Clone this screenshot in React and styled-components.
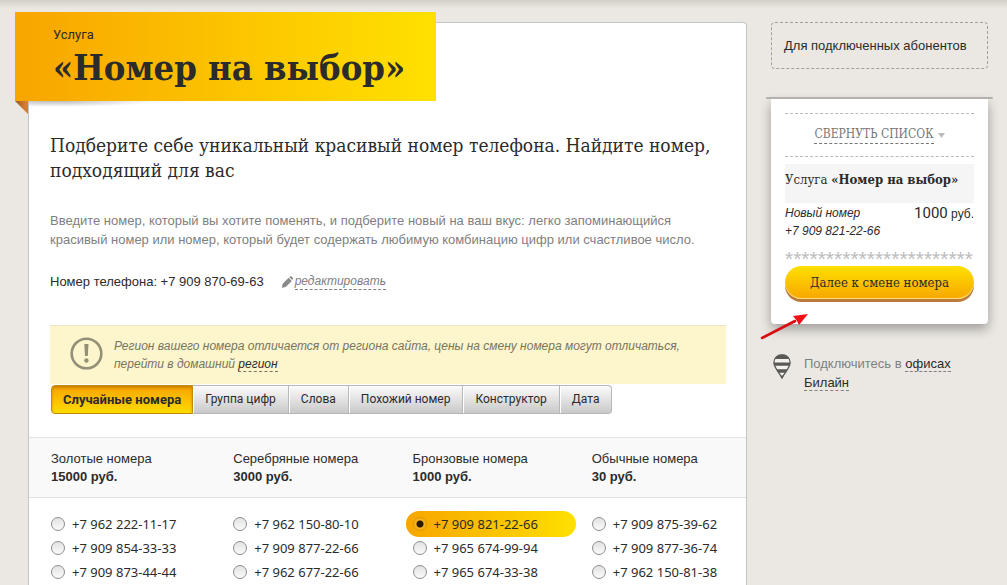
import React, { useState } from "react";
import styled, { createGlobalStyle, css } from "styled-components";

const serif = '"DejaVu Serif Condensed", "DejaVu Serif", serif';
const sans = '"Liberation Sans", Arial, sans-serif';
const digits = '"Noto Sans", "Open Sans", sans-serif';

const GlobalStyle = createGlobalStyle`
  *, *::before, *::after { box-sizing: border-box; }
  body { margin: 0; background: #ebe8e3; color: #2b2b2b; font: 13px/19px ${sans}; }
  h1, h2, p { margin: 0; }
  button, input { font: inherit; color: inherit; margin: 0; }
`;

const Page = styled.div`
  display: flex;
  align-items: stretch;
  gap: 24px;
  min-height: 100vh;
  padding: 22px 19px 0 28px;
  background: linear-gradient(#d2cec8, #e2dfd9 5px, #ebe8e3 9px);
`;

const Panel = styled.main`
  flex: 1;
  min-width: 0;
  background: #fff;
  border: 1px solid #c6c5c5;
  border-bottom: 0;
  border-radius: 4px 4px 0 0;
`;

const Banner = styled.header`
  position: relative;
  width: fit-content;
  margin: -11px 0 0 -14px;
  padding: 14px 31px 11px 38px;
  background: linear-gradient(90deg, #f8a500, #fbbd00 40%, #ffe100);
  &::before {
    content: "";
    position: absolute;
    top: 100%;
    left: 0;
    width: 13px;
    height: 13px;
    background: linear-gradient(90deg, #8f5a2a, #d97c2c 80%);
    clip-path: polygon(0 0, 100% 0, 100% 100%);
  }
  &::after {
    content: "";
    position: absolute;
    top: 100%;
    left: 14px;
    width: 130px;
    height: 6px;
    background: radial-gradient(ellipse at 20% 0, #0004, transparent 70%);
  }
`;

const BannerKind = styled.p`
  font: 13px/18px Roboto, sans-serif;
`;

const BannerTitle = styled.h1`
  font: bold 36px/46px ${serif};
  white-space: nowrap;
`;

const Intro = styled.section`
  padding: 32px 20px 0 21px;
`;

const Lead = styled.h2`
  font: 19px/25px ${serif};
`;

const Description = styled.p`
  margin-top: 28px;
  color: #808080;
`;

const PhoneRow = styled.div`
  display: flex;
  align-items: center;
  gap: 18px;
  margin-top: 23px;
`;

const DashedLink = styled.a`
  color: inherit;
  text-decoration: none;
  border-bottom: 1px dashed currentColor;
`;

const EditLink = styled.span`
  display: flex;
  align-items: center;
  gap: 2px;
  color: #808080;
  font-size: 12px;
  font-style: italic;
  line-height: 15px;
`;

const Alert = styled.div`
  display: flex;
  align-items: flex-start;
  gap: 11px;
  margin-top: 34px;
  padding: 11px 20px;
  background: #fdf5cb;
  border-top: 1px solid #ece5c4;
  color: #77745f;
  font-size: 12px;
  font-style: italic;
  line-height: 18px;
  a { color: #2b2b2b; border-color: #77745f; }
  svg { flex: none; }
`;

const Tabs = styled.div`
  display: flex;
  width: fit-content;
  margin: 1px 0 0 1px;
`;

const Tab = styled.button`
  height: 29px;
  padding: 0 12px;
  border: 1px solid #b8b8b8;
  border-width: 1px 1px 1px 0;
  background: linear-gradient(#fbfbfb, #c9c9c9);
  box-shadow: inset 1px 0 #fff;
  font: 12px/19px Roboto, sans-serif;
  white-space: nowrap;
  cursor: pointer;
  &:first-child { border-radius: 4px 0 0 4px; }
  &:last-child { border-radius: 0 4px 4px 0; }
  ${(p) => p.$active && css`
    padding: 0 11px;
    border: 1px solid #c28a08;
    background: linear-gradient(#f8a300, #ffdc00);
    box-shadow: inset 0 2px 3px #b06e0099;
    font-size: 13px;
    font-weight: 700;
  `}
`;

const Numbers = styled.table`
  width: 100%;
  margin-top: 23px;
  table-layout: fixed;
  border-collapse: separate;
  border-spacing: 0;
  th {
    padding: 12px 0 11px 25px;
    background: #f9f9f9;
    border: 1px solid #e3e3e3;
    border-width: 1px 0;
    font-weight: 400;
    line-height: 18px;
    text-align: left;
  }
  th:first-child { padding-left: 22px; }
  td { padding: 0 0 0 18px; }
  td:first-child { padding-left: 15px; }
  tbody tr:first-child td { padding-top: 14px; }
`;

const Price = styled.strong`
  display: block;
`;

const Choice = styled.label`
  display: flex;
  align-items: center;
  gap: 7px;
  width: 170px;
  height: 26px;
  margin: -1px 0;
  padding-left: 7px;
  border-radius: 13px;
  font: 13px/24px ${digits};
  white-space: nowrap;
  cursor: pointer;
  ${(p) => p.$selected && css`
    background: linear-gradient(90deg, #f7a600, #fcd000 75%, #ffe000);
  `}
`;

const Radio = styled.input`
  appearance: none;
  flex: none;
  width: 14px;
  height: 14px;
  border: 1px solid #8e8e8e;
  border-radius: 50%;
  background: linear-gradient(#e2e2e2, #fafafa);
  &:checked {
    border-color: #dc9a08;
    background: radial-gradient(circle, #2a1a00 3px, #f5b21c 4px);
  }
`;

const Sidebar = styled.aside`
  flex: none;
  width: 217px;
`;

const Subscribers = styled.div`
  padding: 13px 12px;
  border: 1px dashed #a3a09b;
  border-radius: 4px;
  white-space: nowrap;
`;

const Receipt = styled.section`
  position: relative;
  margin-top: 30px;
  padding: 14px 14px 23px;
  background: #fff;
  border-radius: 0 0 4px 4px;
  box-shadow: 0 5px 12px #0005;
  &::before {
    content: "";
    position: absolute;
    top: -2px;
    left: -5px;
    right: -5px;
    height: 2px;
    background: #b3b0ad;
    border-radius: 1px;
  }
`;

const Collapse = styled.button`
  display: flex;
  justify-content: center;
  align-items: center;
  gap: 4px;
  width: 100%;
  height: 44px;
  padding: 0;
  border: 1px dashed #b9b9b9;
  border-width: 1px 0;
  background: none;
  color: #777;
  font: 12px/17px ${serif};
  white-space: nowrap;
  cursor: pointer;
`;

const CollapseText = styled.span`
  border-bottom: 1px dashed currentColor;
`;

const ServiceName = styled.p`
  height: 39px;
  margin-top: 7px;
  background: #f5f5f5;
  font: 13px/32px ${serif};
  white-space: nowrap;
`;

const OrderLine = styled.div`
  display: flex;
  justify-content: space-between;
  margin-top: 1px;
  font-size: 12px;
  line-height: 18px;
  em { display: block; }
`;

const Amount = styled.span`
  font-size: 12px;
  white-space: nowrap;
  b { font: 15px/18px Roboto, sans-serif; }
`;

const Stars = styled.div`
  height: 14px;
  margin: 8px 0 4px;
  color: #bdbdbd;
  font-size: 21px;
  line-height: 22px;
  white-space: nowrap;
`;

const NextButton = styled.button`
  position: relative;
  display: block;
  width: 100%;
  height: 33px;
  margin-bottom: 2px;
  padding: 0;
  border: 0;
  border-radius: 17px;
  background: linear-gradient(#ffe000, #f7a600);
  box-shadow: inset 0 -1px 1px #ffdf80, 0 3px #b97a3c;
  font: 13px/32px ${serif};
  white-space: nowrap;
  cursor: pointer;
`;

const Pointer = styled.svg`
  position: absolute;
  left: -12px;
  bottom: -16px;
`;

const Offices = styled.div`
  display: flex;
  gap: 13px;
  margin-top: 30px;
  padding-left: 2px;
  color: #808080;
  a { color: #2b2b2b; border-color: #808080; }
  svg { flex: none; }
`;

const TABS = ["Случайные номера", "Группа цифр", "Слова", "Похожий номер", "Конструктор", "Дата"];

const GROUPS = [
  { name: "Золотые номера", price: "15000 руб." },
  { name: "Серебряные номера", price: "3000 руб." },
  { name: "Бронзовые номера", price: "1000 руб." },
  { name: "Обычные номера", price: "30 руб." },
];

const ROWS = [
  ["+7 962 222-11-17", "+7 962 150-80-10", "+7 909 821-22-66", "+7 909 875-39-62"],
  ["+7 909 854-33-33", "+7 909 877-22-66", "+7 965 674-99-94", "+7 909 877-36-74"],
  ["+7 909 873-44-44", "+7 962 677-22-66", "+7 965 674-33-38", "+7 962 150-81-38"],
];

const PencilIcon = () => (
  <svg width="11" height="12" viewBox="0 0 11 12" fill="#8a8a8a" aria-hidden="true">
    <path d="M0 12 .6 7.800 6.600 1.800 9.800 5 4 10.800Z" />
    <path d="M7.300 1.200 8.300.3Q9 0 9.600.5L10.700 1.600Q11.300 2.300 10.800 3.100L10.300 4Z" />
  </svg>
);

const WarningIcon = () => (
  <svg width="33" height="33" viewBox="0 0 33 33" aria-hidden="true">
    <circle cx="16.500" cy="16.500" r="14.800" fill="none" stroke="#949078" strokeWidth="2.600" />
    <path d="M14.300 7h4.200l-.7 12h-2.800z" fill="#949078" />
    <circle cx="16.400" cy="23.500" r="2.200" fill="#949078" />
  </svg>
);

const PinIcon = () => (
  <svg width="18" height="25" viewBox="0 0 18 25" aria-hidden="true">
    <path d="M9 .8C4 .8.9 4.300.9 8.600.9 14 6.500 18.500 9 24c2.500-5.500 8.100-10 8.100-15.400C17.100 4.300 14 .8 9 .8Z" fill="#f4f2ee" stroke="#5b5955" strokeWidth="1.300" />
    <path d="M1.800 5Q4 .6 9 .6t7.200 4.400ZM.8 8.600H17.200Q17.200 10.200 16.600 11.800H1.400Q.8 10.200.8 8.600ZM3.200 15.200H14.800L12.400 18.800H5.600ZM7 21.500h4L9 24.500Z" fill="#5b5955" />
  </svg>
);

export default function App() {
  const [tab, setTab] = useState(TABS[0]);
  const [chosen, setChosen] = useState("+7 909 821-22-66");

  return (
    <>
      <GlobalStyle />
      <Page>
        <Panel>
          <Banner>
            <BannerKind>Услуга</BannerKind>
            <BannerTitle>«Номер на выбор»</BannerTitle>
          </Banner>
          <Intro>
            <Lead>
              Подберите себе уникальный красивый номер телефона. Найдите номер, подходящий для вас
            </Lead>
            <Description>
              Введите номер, который вы хотите поменять, и подберите новый на ваш вкус: легко запоминающийся
              красивый номер или номер, который будет содержать любимую комбинацию цифр или счастливое число.
            </Description>
            <PhoneRow>
              <span>Номер телефона: +7 909 870-69-63</span>
              <EditLink>
                <PencilIcon />
                <DashedLink href="#edit">редактировать</DashedLink>
              </EditLink>
            </PhoneRow>
            <Alert role="note">
              <WarningIcon />
              <p>
                Регион вашего номера отличается от региона сайта, цены на смену номера могут отличаться,
                перейти в домашний <DashedLink href="#region">регион</DashedLink>
              </p>
            </Alert>
            <Tabs>
              {TABS.map((name) => (
                <Tab key={name} type="button" $active={name === tab} aria-pressed={name === tab} onClick={() => setTab(name)}>
                  {name}
                </Tab>
              ))}
            </Tabs>
          </Intro>
          <Numbers>
            <thead>
              <tr>
                {GROUPS.map((g) => (
                  <th key={g.name} scope="col">
                    {g.name}
                    <Price>{g.price}</Price>
                  </th>
                ))}
              </tr>
            </thead>
            <tbody>
              {ROWS.map((row) => (
                <tr key={row[0]}>
                  {row.map((number) => (
                    <td key={number}>
                      <Choice $selected={number === chosen}>
                        <Radio type="radio" name="number" checked={number === chosen} onChange={() => setChosen(number)} />
                        {number}
                      </Choice>
                    </td>
                  ))}
                </tr>
              ))}
            </tbody>
          </Numbers>
        </Panel>
        <Sidebar>
          <Subscribers>Для подключенных абонентов</Subscribers>
          <Receipt>
            <Collapse type="button">
              <CollapseText>СВЕРНУТЬ СПИСОК</CollapseText>
              <svg width="7" height="5" viewBox="0 0 7 5" aria-hidden="true">
                <path d="M0 0h7L3.500 5z" fill="#bbb" />
              </svg>
            </Collapse>
            <ServiceName>Услуга <b>«Номер на выбор»</b></ServiceName>
            <OrderLine>
              <span>
                <em>Новый номер</em>
                <em>{chosen}</em>
              </span>
              <Amount><b>1000</b> руб.</Amount>
            </OrderLine>
            <Stars aria-hidden="true">{"*".repeat(23)}</Stars>
            <NextButton type="button">Далее к смене номера</NextButton>
            <Pointer width="50" height="28" viewBox="0 0 50 28" aria-hidden="true">
              <path d="M3 26 36 9" stroke="#d80f12" strokeWidth="2.600" strokeLinecap="round" />
              <path d="M49 2 40 13 38 9 34 4Z" fill="#f01015" />
            </Pointer>
          </Receipt>
          <Offices>
            <PinIcon />
            <p>
              Подключитесь в <DashedLink href="#offices">офисах Билайн</DashedLink>
            </p>
          </Offices>
        </Sidebar>
      </Page>
    </>
  );
}
